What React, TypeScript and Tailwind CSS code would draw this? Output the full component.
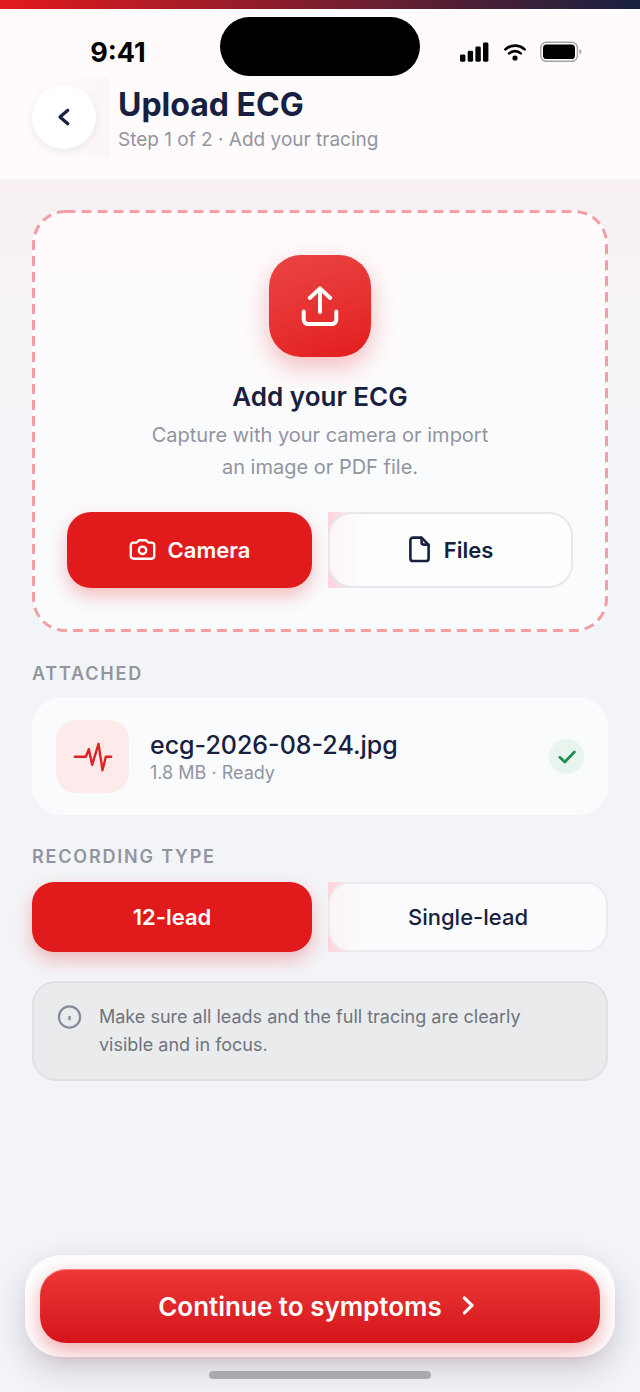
import React, { useState } from "react";

type RecordingType = "12-lead" | "single-lead";

function StatusBar() {
  return (
    <div className="grid h-[59px] grid-cols-[1fr_200px_1fr] items-center">
      <div className="pt-3 pl-4 text-center text-[27px] leading-8 font-bold text-black">9:41</div>
      <div className="h-full rounded-full bg-black" />
      <div className="flex items-center gap-[14px] pt-[11px] pl-10">
        <svg width="30" height="20" viewBox="0 0 30 20" fill="#000" aria-hidden="true">
          <rect x="0" y="12.5" width="5.4" height="7.2" rx="1.4" />
          <rect x="7.7" y="8.7" width="5.4" height="11" rx="1.4" />
          <rect x="15.4" y="4.5" width="5.4" height="15.2" rx="1.4" />
          <rect x="23" y="0.5" width="5.4" height="19.2" rx="1.4" />
        </svg>
        <svg width="22" height="18" viewBox="0 0 22 18" fill="none" aria-hidden="true">
          <path d="M1.4 6.4a14 14 0 0 1 19.2 0" stroke="#000" strokeWidth="2.6" strokeLinecap="round" />
          <path d="M5.2 10.4a8.6 8.6 0 0 1 11.6 0" stroke="#000" strokeWidth="2.6" strokeLinecap="round" />
          <circle cx="11" cy="15" r="2.6" fill="#000" />
        </svg>
        <svg width="42" height="22" viewBox="0 0 42 22" fill="none" aria-hidden="true">
          <rect x="0.8" y="1.3" width="36.6" height="19" rx="5.6" stroke="#a5a1a3" strokeWidth="1.4" />
          <rect x="3" y="3.6" width="32" height="14.4" rx="3.6" fill="#000" />
          <path d="M39.4 8v5.4c2.6-1 2.6-4.4 0-5.4z" fill="#a5a1a3" />
        </svg>
      </div>
    </div>
  );
}

function Header() {
  return (
    <header className="bg-[#fffafb] pt-2 pb-[25px]">
      <StatusBar />
      <div className="mt-[9px] flex items-start gap-[22px] px-8">
        <div className="relative">
          <div className="absolute -top-2 left-8 h-20 w-[46px] bg-linear-to-r from-transparent to-[#fbf5f7]" />
          <button
            type="button"
            aria-label="Back"
            className="relative flex size-16 items-center justify-center rounded-full bg-white shadow-[0_3px_10px_rgba(30,30,60,0.08)]"
          >
            <svg width="16" height="20" viewBox="0 0 16 20" fill="none" aria-hidden="true">
              <path
                d="M11.8 3.2 4 10l7.8 6.8"
                stroke="#17213f"
                strokeWidth="3.2"
                strokeLinecap="round"
                strokeLinejoin="round"
              />
            </svg>
          </button>
        </div>
        <div>
          <h1 className="text-[32px] leading-10 font-bold text-[#17213f]">Upload ECG</h1>
          <p className="text-[19px] leading-[29px] text-[#92959f]">Step 1 of 2 · Add your tracing</p>
        </div>
      </div>
    </header>
  );
}

function UploadCard() {
  return (
    <section className="relative flex flex-col items-center rounded-[34px] bg-linear-to-b from-[#fffafb] to-[#fafbfd] to-60% px-[35px] pt-[45px] pb-11">
      {/* dashed outline */}
      <svg className="pointer-events-none absolute inset-0 size-full" fill="none" aria-hidden="true">
        <rect
          x="1.5"
          y="1.5"
          rx="32"
          className="h-[calc(100%-3px)] w-[calc(100%-3px)]"
          stroke="#f09fa3"
          strokeWidth="3"
          strokeDasharray="10 6"
        />
      </svg>

      <div className="flex size-[102px] items-center justify-center rounded-[32px] bg-linear-160 from-[#ea4444] to-[#e31a1c] shadow-[0_10px_24px_rgba(227,27,28,0.28)]">
        <svg width="40" height="40" viewBox="0 0 40 40" fill="none" aria-hidden="true">
          <g stroke="#fff" strokeWidth="4" strokeLinecap="round" strokeLinejoin="round">
            <path d="M3.7 25.4v8.2a4.4 4.4 0 0 0 4.4 4.4h23.8a4.4 4.4 0 0 0 4.4-4.4v-8.2" />
            <path d="M20 26V2.600M9.800 12 20 2.400l10.200 9.600" />
          </g>
        </svg>
      </div>

      <h2 className="mt-6 text-[26px] leading-8 font-semibold text-[#17213f]">Add your ECG</h2>
      <p className="mt-[6px] max-w-[350px] text-center text-[20px] leading-8 text-[#92959f]">
        Capture with your camera or import an image or PDF file.
      </p>

      <div className="mt-[29px] grid w-full grid-cols-2 gap-4">
        <button
          type="button"
          className="flex h-[76px] items-center justify-center gap-3 rounded-3xl bg-[#e11b1c] text-[22px] font-semibold text-white shadow-[0_8px_18px_rgba(225,27,28,0.28)]"
        >
          <svg width="27" height="24" viewBox="0 0 27 24" fill="none" aria-hidden="true">
            <g stroke="#fff" strokeWidth="2.4" strokeLinejoin="round">
              <path d="M4.4 4.6h2.8c.8 0 1.2-.4 1.6-1.1.4-.8.9-1.3 1.9-1.3h5.6c1 0 1.5.5 1.9 1.3.4.7.8 1.1 1.6 1.1h2.8a2.6 2.6 0 0 1 2.6 2.6v10.9a2.6 2.6 0 0 1-2.6 2.6H4.4a2.6 2.6 0 0 1-2.6-2.6V7.2a2.6 2.6 0 0 1 2.6-2.6z" />
              <circle cx="13.5" cy="12.3" r="3.7" />
            </g>
          </svg>
          Camera
        </button>
        <div className="bg-[linear-gradient(to_right,#ffd3db,#ffffff00_42px)]">
          <button
            type="button"
            className="flex h-[76px] w-full items-center justify-center gap-3 rounded-3xl border-2 border-[#e8e8ec] bg-white/75 text-[22px] font-semibold text-[#17213f]"
          >
            <svg width="24" height="28" viewBox="0 0 24 28" fill="none" aria-hidden="true">
              <g stroke="#17213f" strokeWidth="2.6" strokeLinejoin="round" strokeLinecap="round">
                <path d="M5 1.6h8.6l7 7.2v13.6a2.6 2.6 0 0 1-2.6 2.6H5a2.6 2.6 0 0 1-2.6-2.6V4.2A2.6 2.6 0 0 1 5 1.6z" />
                <path d="M13.6 2v4.600a2 2 0 0 0 2 2h4.600" />
              </g>
            </svg>
            Files
          </button>
        </div>
      </div>
    </section>
  );
}

function AttachedFile() {
  return (
    <section className="mt-[30px]">
      <h2 className="text-[18px] leading-6 font-semibold tracking-widest text-[#92959f]">ATTACHED</h2>
      <div className="mt-3 flex h-[117px] items-center rounded-[28px] border border-[#fcfcfe] bg-[#fafbfd] px-[23px]">
        <div className="flex size-[73px] items-center justify-center rounded-[20px] bg-[#fdebeb]">
          <svg width="40" height="40" viewBox="0 0 40 40" fill="none" aria-hidden="true">
            <path
              d="M1.8 19.8h11l3-7.600 3.400 15.600 6.300-21 4 26.400 3.300-13.400h5.400"
              stroke="#df2324"
              strokeWidth="2.4"
              strokeLinecap="round"
              strokeLinejoin="round"
            />
          </svg>
        </div>
        <div className="ml-[21px] flex-1 pt-[2px]">
          <div className="text-[25px] leading-[30px] font-medium text-[#17213f]">ecg-2026-08-24.jpg</div>
          <div className="text-[18px] leading-[26px] text-[#92959f]">1.8 MB · Ready</div>
        </div>
        <div className="flex size-[35px] items-center justify-center rounded-full bg-[#e8f5ee]">
          <svg width="20" height="16" viewBox="0 0 20 16" fill="none" aria-hidden="true">
            <path
              d="M2.8 8.2 7.8 13 17.400 3"
              stroke="#1f8f50"
              strokeWidth="2.8"
              strokeLinecap="round"
              strokeLinejoin="round"
            />
          </svg>
        </div>
      </div>
    </section>
  );
}

interface RecordingPickerProps {
  value: RecordingType;
  onChange: (value: RecordingType) => void;
}

function RecordingPicker({ value, onChange }: RecordingPickerProps) {
  const options: { id: RecordingType; label: string }[] = [
    { id: "12-lead", label: "12-lead" },
    { id: "single-lead", label: "Single-lead" },
  ];

  return (
    <fieldset className="mt-[30px]">
      <legend className="text-[18px] leading-6 font-semibold tracking-widest text-[#92959f]">
        RECORDING TYPE
      </legend>
      <div className="mt-[13px] grid grid-cols-2 gap-4">
        {options.map((option) => {
          const active = option.id === value;
          return (
            <div
              key={option.id}
              className={active ? "" : "bg-[linear-gradient(to_right,#ffd3db,#ffffff00_42px)]"}
            >
              <label
                className={`relative flex h-[70px] cursor-pointer items-center justify-center rounded-[22px] text-[22px] ${
                  active
                    ? "bg-[#e11b1c] font-semibold text-white shadow-[0_8px_18px_rgba(225,27,28,0.28)]"
                    : "border-2 border-[#ebebef] bg-[#fdfeff]/75 font-medium text-[#17213f]"
                }`}
              >
                <input
                  type="radio"
                  name="recording"
                  className="sr-only"
                  checked={active}
                  onChange={() => onChange(option.id)}
                />
                {option.label}
              </label>
            </div>
          );
        })}
      </div>
    </fieldset>
  );
}

function Note() {
  return (
    <div className="mt-[29px] flex gap-[17px] rounded-3xl border-2 border-[#dfe1e4] bg-[#eaebed] px-[23px] py-5">
      <svg width="25" height="28" viewBox="0 0 25 28" fill="none" className="shrink-0" aria-hidden="true">
        <circle cx="12.5" cy="14" r="10.6" stroke="#858a9c" strokeWidth="2.2" />
        <path d="M12.5 13v4.2" stroke="#858a9c" strokeWidth="2.4" />
      </svg>
      <p className="max-w-[440px] text-[18px] leading-7 text-[#6f737e]">
        Make sure all leads and the full tracing are clearly visible and in focus.
      </p>
    </div>
  );
}

export default function App() {
  const [recording, setRecording] = useState<RecordingType>("12-lead");

  return (
    <div className="flex min-h-screen flex-col bg-[linear-gradient(to_bottom,#f8f0f3_180px,#f3f4f7_420px,#f3f4f8)] font-['Inter','Liberation_Sans',sans-serif]">
      <div className="h-[9px] bg-linear-to-r/srgb from-[#e31a1c] to-[#17213f]" />
      <Header />

      <main className="flex-1 px-8 pt-[31px] pb-8">
        <UploadCard />
        <AttachedFile />
        <RecordingPicker value={recording} onChange={setRecording} />
        <Note />
      </main>

      <footer className="flex flex-col items-center px-[25px] pb-[13px]">
        <div className="w-full rounded-[36px] bg-[#fdfdfe] px-[15px] py-[14px] shadow-[0_12px_32px_rgba(30,30,60,0.18)]">
          <button
            type="button"
            className="flex h-[74px] w-full items-center justify-center gap-5 rounded-[26px] bg-linear-to-b from-[#ee3636] to-[#d4131a] pr-2 text-[26px] font-semibold text-white shadow-[inset_0_1px_1px_rgba(255,255,255,0.4),0_8px_20px_rgba(225,27,28,0.36)]"
          >
            Continue to symptoms
            <svg width="12" height="20" viewBox="0 0 12 20" fill="none" aria-hidden="true">
              <path
                d="M2.4 2 10 9.400l-7.600 7.400"
                stroke="#fff"
                strokeWidth="3.2"
                strokeLinecap="round"
                strokeLinejoin="round"
              />
            </svg>
          </button>
        </div>
        <div className="relative mt-[14px] h-2 w-[222px] rounded-full bg-[#a9aaae]" />
      </footer>
    </div>
  );
}
